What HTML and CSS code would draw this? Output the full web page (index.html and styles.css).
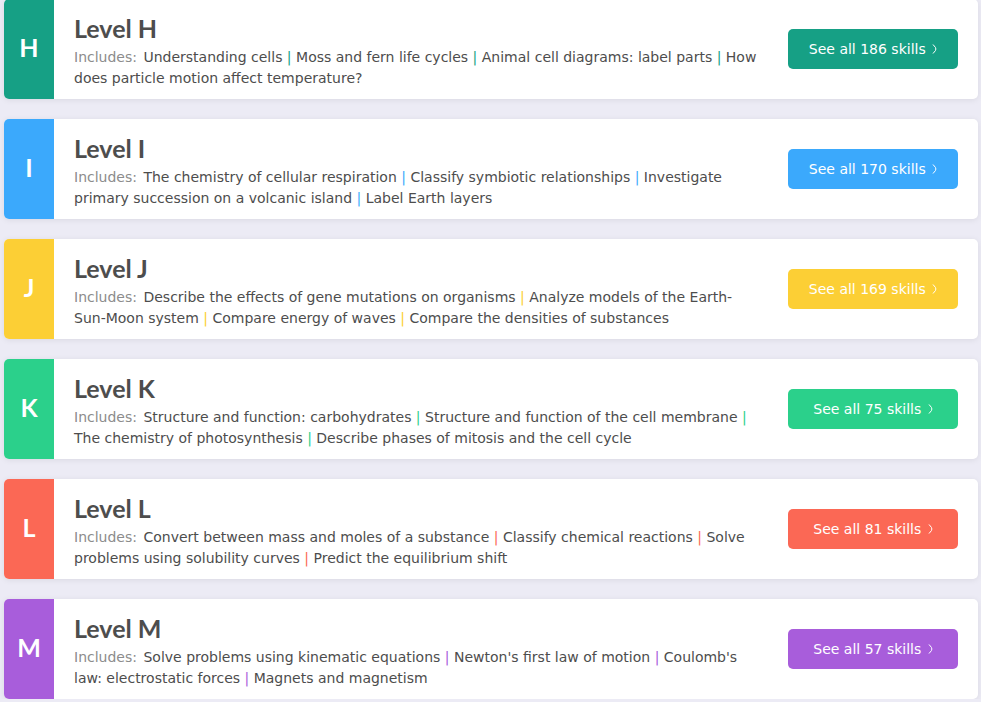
FILE: index.html
```html
<!DOCTYPE html>
<html lang="en">
<head>
    <meta charset="UTF-8">
    <meta name="viewport" content="width=device-width, initial-scale=1.0">
    <title>Science skills by level</title>
    <link rel="stylesheet" href="styles.css">
</head>
<body>
    <main class="levels">
        <section class="level level-h">
            <div class="badge">H</div>
            <div class="info">
                <h2>Level H</h2>
                <p><span class="includes">Includes: </span><a href="#">Understanding cells</a><span class="sep"> | </span><a href="#">Moss and fern life cycles</a><span class="sep"> | </span><a href="#">Animal cell diagrams: label parts</a><span class="sep"> | </span><a href="#">How does particle motion affect temperature?</a></p>
            </div>
            <a class="see-all" href="#">See all 186 skills <svg class="chevron" viewBox="0 0 5 10" aria-hidden="true"><path d="M1 0.5L3.5 3.5Q4.2 5 3.5 6.5L1 9.5"/></svg></a>
        </section>

        <section class="level level-i">
            <div class="badge">I</div>
            <div class="info">
                <h2>Level I</h2>
                <p><span class="includes">Includes: </span><a href="#">The chemistry of cellular respiration</a><span class="sep"> | </span><a href="#">Classify symbiotic relationships</a><span class="sep"> | </span><a href="#">Investigate primary succession on a volcanic island</a><span class="sep"> | </span><a href="#">Label Earth layers</a></p>
            </div>
            <a class="see-all" href="#">See all 170 skills <svg class="chevron" viewBox="0 0 5 10" aria-hidden="true"><path d="M1 0.5L3.5 3.5Q4.2 5 3.5 6.5L1 9.5"/></svg></a>
        </section>

        <section class="level level-j">
            <div class="badge">J</div>
            <div class="info">
                <h2>Level J</h2>
                <p><span class="includes">Includes: </span><a href="#">Describe the effects of gene mutations on organisms</a><span class="sep"> | </span><a href="#">Analyze models of the Earth-Sun-Moon system</a><span class="sep"> | </span><a href="#">Compare energy of waves</a><span class="sep"> | </span><a href="#">Compare the densities of substances</a></p>
            </div>
            <a class="see-all" href="#">See all 169 skills <svg class="chevron" viewBox="0 0 5 10" aria-hidden="true"><path d="M1 0.5L3.5 3.5Q4.2 5 3.5 6.5L1 9.5"/></svg></a>
        </section>

        <section class="level level-k">
            <div class="badge">K</div>
            <div class="info">
                <h2>Level K</h2>
                <p><span class="includes">Includes: </span><a href="#">Structure and function: carbohydrates</a><span class="sep"> | </span><a href="#">Structure and function of the cell membrane</a><span class="sep"> | </span><a href="#">The chemistry of photosynthesis</a><span class="sep"> | </span><a href="#">Describe phases of mitosis and the cell cycle</a></p>
            </div>
            <a class="see-all" href="#">See all 75 skills <svg class="chevron" viewBox="0 0 5 10" aria-hidden="true"><path d="M1 0.5L3.5 3.5Q4.2 5 3.5 6.5L1 9.5"/></svg></a>
        </section>

        <section class="level level-l">
            <div class="badge">L</div>
            <div class="info">
                <h2>Level L</h2>
                <p><span class="includes">Includes: </span><a href="#">Convert between mass and moles of a substance</a><span class="sep"> | </span><a href="#">Classify chemical reactions</a><span class="sep"> | </span><a href="#">Solve problems using solubility curves</a><span class="sep"> | </span><a href="#">Predict the equilibrium shift</a></p>
            </div>
            <a class="see-all" href="#">See all 81 skills <svg class="chevron" viewBox="0 0 5 10" aria-hidden="true"><path d="M1 0.5L3.5 3.5Q4.2 5 3.5 6.5L1 9.5"/></svg></a>
        </section>

        <section class="level level-m">
            <div class="badge">M</div>
            <div class="info">
                <h2>Level M</h2>
                <p><span class="includes">Includes: </span><a href="#">Solve problems using kinematic equations</a><span class="sep"> | </span><a href="#">Newton's first law of motion</a><span class="sep"> | </span><a href="#">Coulomb's law: electrostatic forces</a><span class="sep"> | </span><a href="#">Magnets and magnetism</a></p>
            </div>
            <a class="see-all" href="#">See all 57 skills <svg class="chevron" viewBox="0 0 5 10" aria-hidden="true"><path d="M1 0.5L3.5 3.5Q4.2 5 3.5 6.5L1 9.5"/></svg></a>
        </section>
    </main>
</body>
</html>
```

FILE: styles.css
```css
body {
    font-family: "DejaVu Sans", Verdana, sans-serif;
    font-size: 14px;
    line-height: 21px;
    margin: 0;
    background-color: #ecebf5;
    color: #4d4d4d;
}

.levels {
    display: flex;
    flex-direction: column;
    gap: 20px;
    margin: -1px 3px 0 4px;
}

.level {
    display: flex;
    align-items: center;
    min-height: 100px;
    padding-right: 20px;
    box-sizing: border-box;
    background: #fff;
    border-radius: 5px;
    box-shadow: 0 1px 6px rgba(0, 0, 0, 0.08);
}

.level-h { --level-color: #16a085; }
.level-i { --level-color: #3ba9fc; }
.level-j { --level-color: #fccf35; }
.level-k { --level-color: #2bd08b; }
.level-l { --level-color: #fb6855; }
.level-m { --level-color: #a85ddb; }

.badge {
    display: flex;
    align-items: center;
    justify-content: center;
    align-self: stretch;
    flex: 0 0 50px;
    padding-bottom: 3px;
    box-sizing: border-box;
    background: var(--level-color);
    border-radius: 5px 0 0 5px;
    color: #fff;
    font-family: Lato, "Trebuchet MS", sans-serif;
    font-size: 25px;
    font-weight: bold;
}

.info {
    flex: 1;
    align-self: flex-start;
    padding: 15px 28px 10px 20px;
}

h2 {
    margin: 0 0 5px;
    font-family: Lato, "Trebuchet MS", sans-serif;
    font-size: 25px;
    font-weight: bold;
    line-height: 28px;
}

p {
    margin: 0;
}

p a {
    color: inherit;
    text-decoration: none;
}

.includes {
    margin-right: 2px;
    color: #8c8c8c;
}

.sep {
    color: var(--level-color);
}

.see-all {
    flex: 0 0 170px;
    background: var(--level-color);
    border-radius: 5px;
    color: #fff;
    line-height: 40px;
    text-align: center;
    text-decoration: none;
}

.chevron {
    width: 5px;
    height: 10px;
    margin-left: 2px;
    fill: none;
    stroke: currentColor;
}

p a:hover,
.see-all:hover {
    text-decoration: underline;
}
```
